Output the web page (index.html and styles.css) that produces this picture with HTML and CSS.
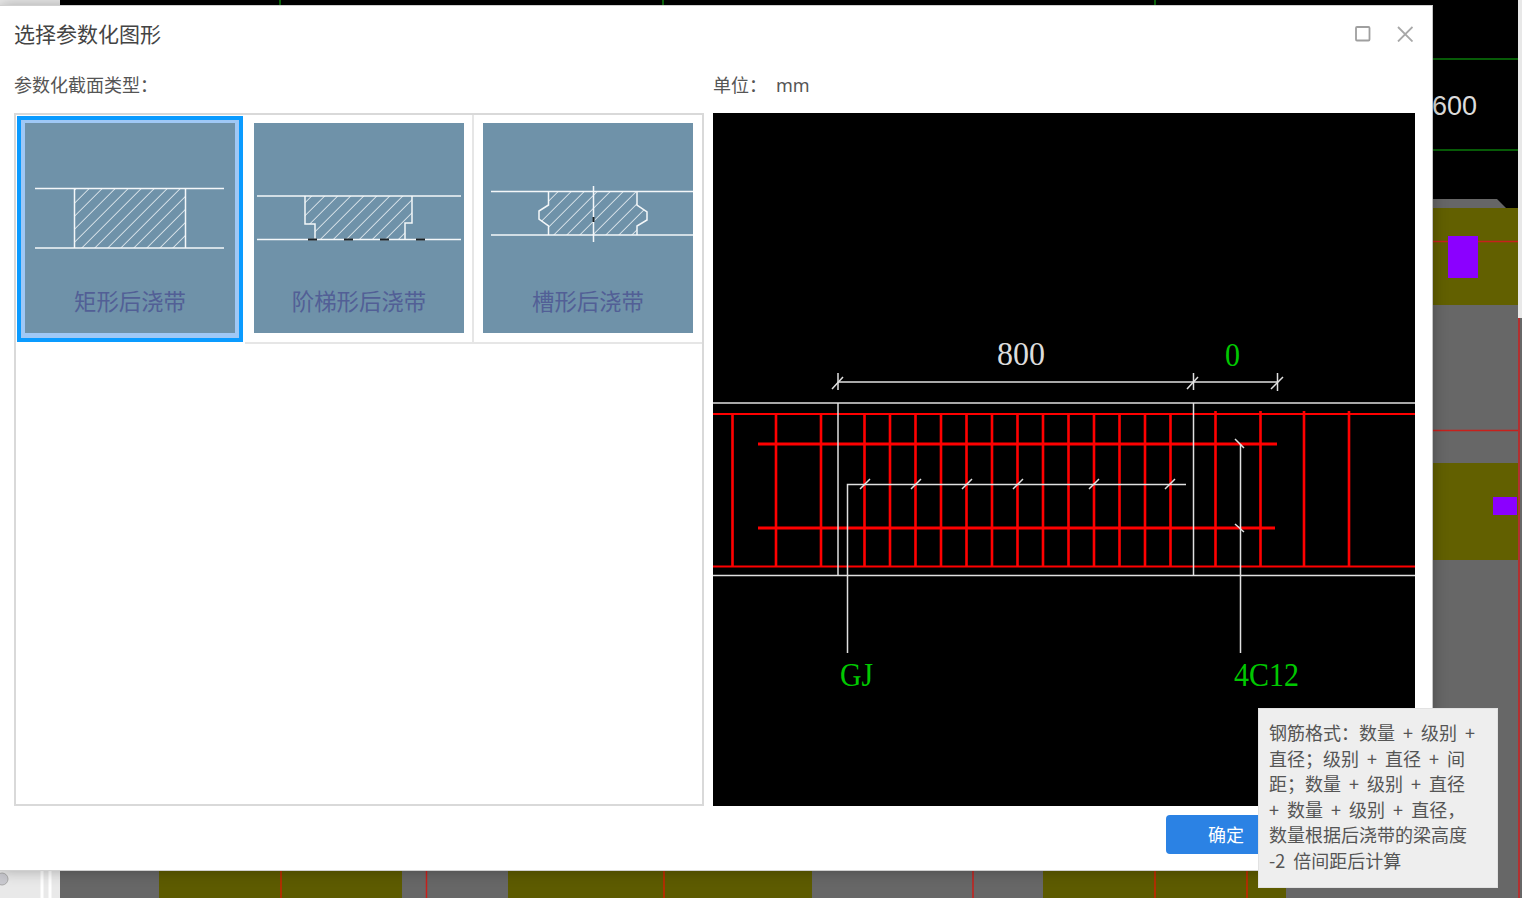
FILE: index.html
```html
<!DOCTYPE html>
<html lang="zh-CN">
<head>
<meta charset="utf-8">
<title>选择参数化图形</title>
<link rel="stylesheet" href="styles.css">
</head>
<body>
<div class="stage">
  <svg class="cad" viewBox="0 0 1522 898" aria-hidden="true">
    <rect x="0" y="0" width="60" height="898" fill="#e9e9e9"/>
    <rect x="60" y="0" width="1462" height="898" fill="#000"/>
    <path d="M280 0V5M663 0V5M1155 0V5" stroke="#0a6a0a" stroke-width="2"/>
    <path d="M1433 59H1518M1433 150H1518" stroke="#0a7a0a" stroke-width="1.5"/>
    <path d="M1433 199H1497L1506 208H1433Z" fill="#666"/>
    <rect x="60" y="208" width="1458" height="690" fill="#676767"/>
    <rect x="1433" y="208" width="85" height="97" fill="#626000"/>
    <rect x="1433" y="463" width="85" height="97" fill="#626000"/>
    <path d="M1433 241.500H1518M1433 430.500H1518" stroke="#c8201c" stroke-width="1.500"/>
    <rect x="1448" y="236" width="30" height="42" fill="#8b00ff"/>
    <rect x="1493" y="497" width="24" height="18" fill="#8b00ff"/>
    <rect x="159" y="870" width="243" height="28" fill="#5d5b00"/>
    <rect x="508" y="870" width="304" height="28" fill="#5d5b00"/>
    <rect x="1043" y="870" width="243" height="28" fill="#5d5b00"/>
    <path d="M281 870V898M664 870V898M1155 870V898M1247 870V898" stroke="#b03000" stroke-width="2"/>
    <path d="M426.500 870V898M973 870V898" stroke="#c8201c" stroke-width="1.500"/>
    <rect x="1518" y="0" width="4" height="318" fill="#e8e8e8"/>
    <rect x="1518" y="318" width="4" height="580" fill="#676767"/>
    <path d="M1519 318V898" stroke="#b23030" stroke-width="2"/>
    <path d="M42 870V898M50 870V898" stroke="#fff" stroke-width="3"/>
    <circle cx="2" cy="879" r="6" fill="#c9c9cf" stroke="#aaa"/>
    <text class="cad-label" x="1432" y="115">600</text>
  </svg>

  <section class="dialog">
    <header class="dialog-head">
      <h1 class="dialog-title">选择参数化图形</h1>
      <div class="win-buttons">
        <svg class="win-icon" viewBox="0 0 16 16" aria-hidden="true"><rect x="1" y="1" width="13.500" height="13.500" rx="1" fill="none" stroke="#9f9f9f" stroke-width="1.800"/></svg>
        <svg class="win-icon" viewBox="0 0 16 16" aria-hidden="true"><path d="M1 1L15.500 15.500M15.500 1L1 15.500" fill="none" stroke="#a8a8a8" stroke-width="1.800"/></svg>
      </div>
    </header>

    <div class="dialog-body">
      <div class="col">
        <div class="field-label">参数化截面类型：</div>
        <div class="type-panel">
          <div class="type-grid">
            <div class="type-cell is-selected">
              <div class="thumb">
                <svg class="thumb-art" viewBox="1 0 210 160" aria-hidden="true">
                  <defs>
                    <pattern id="hatch" width="9.200" height="9.200" patternUnits="userSpaceOnUse" patternTransform="rotate(45)">
                      <line x1="0" y1="0" x2="0" y2="9.200" stroke="#f2f6f8" stroke-width="1.500"/>
                    </pattern>
                  </defs>
                  <rect x="50.500" y="65.500" width="111" height="59.500" fill="url(#hatch)"/>
                  <path d="M11 65.500H200M11 125H200M50.500 65.500V125M161.500 65.500V125" fill="none" stroke="#f4f7f9" stroke-width="1.500"/>
                </svg>
                <div class="thumb-label">矩形后浇带</div>
              </div>
            </div>
            <div class="type-cell">
              <div class="thumb">
                <svg class="thumb-art" viewBox="0 0 210 160" aria-hidden="true">
                  <path d="M51 73H158V100H151V116.500H61V101H51Z" fill="url(#hatch)"/>
                  <path d="M3 73H207M3 116.500H207M51 73V101H61V116.500M158 73V100H151V116.500" fill="none" stroke="#f4f7f9" stroke-width="1.500"/>
                  <path d="M54 116.500H63M90 116.500H99M126 116.500H135M162 116.500H171" fill="none" stroke="#1b2226" stroke-width="2"/>
                </svg>
                <div class="thumb-label">阶梯形后浇带</div>
              </div>
            </div>
            <div class="type-cell">
              <div class="thumb">
                <svg class="thumb-art" viewBox="0 0 210 160" aria-hidden="true">
                  <path d="M65.500 68.500V82L56 88V96L65.500 103V112H154V103L164 97V89L154 82V68.500Z" fill="url(#hatch)"/>
                  <path d="M8 68.500H210M8 112H210M110.500 63V119M65.500 68.500V82L56 88V96L65.500 103V112M154 68.500V82L164 89V97L154 103V112" fill="none" stroke="#f4f7f9" stroke-width="1.500"/>
                  <path d="M110.500 94V99" fill="none" stroke="#1b2226" stroke-width="2"/>
                </svg>
                <div class="thumb-label">槽形后浇带</div>
              </div>
            </div>
          </div>
        </div>
      </div>

      <div class="col">
        <div class="field-label">单位：<span class="unit">mm</span></div>
        <div class="preview">
          <svg class="preview-art" viewBox="713 113 702 693">
            <g stroke="#f00" fill="none">
              <path d="M713 414H1415M713 566.500H1415" stroke-width="2"/>
              <path d="M758 444H1277M758 528H1275" stroke-width="3"/>
              <path d="M732.500 414V566M776 414V566M821 414V566M864.500 414V566M890 414V566M915.500 414V566M941 414V566M966.500 414V566M992 414V566M1017.500 414V566M1043 414V566M1068.500 414V566M1094 414V566M1119.500 414V566M1145 414V566M1170.500 414V566M1215.500 411V566M1260.500 411V566M1304 411V566M1349 411V566" stroke-width="2.600"/>
            </g>
            <g stroke="#e0e0e0" fill="none" stroke-width="1.500">
              <path d="M713 403H1415M713 575.500H1415"/>
              <path d="M838 403V575M1193.500 403V575"/>
              <path d="M838 382H1277"/>
              <path d="M838 373V390M1193.500 373V390M1277.500 373V391"/>
              <path d="M832 389L843 377M1187 389L1198 377M1271 389L1283 377"/>
              <path d="M847.500 653V484.500H1186"/>
              <path d="M1240.500 653V444"/>
              <path d="M860 489L870 479M911 489L921 479M962 489L972 479M1013 489L1023 479M1089 489L1099 479M1165 489L1175 479"/>
              <path d="M1235 439L1244 448M1235 524L1244 532"/>
            </g>
            <text class="cad-num white" x="997" y="365" textLength="48" lengthAdjust="spacingAndGlyphs">800</text>
            <text class="cad-num green" x="1225" y="366" textLength="15" lengthAdjust="spacingAndGlyphs">0</text>
            <text class="cad-num green" x="840" y="686" textLength="33" lengthAdjust="spacingAndGlyphs">GJ</text>
            <text class="cad-num green" x="1234" y="686" textLength="65" lengthAdjust="spacingAndGlyphs">4C12</text>
          </svg>
        </div>
      </div>
    </div>

    <footer class="dialog-foot">
      <button class="primary-btn" type="button">确定</button>
    </footer>
  </section>

  <div class="tooltip">钢筋格式：数量 + 级别 +<br>直径；级别 + 直径 + 间<br>距；数量 + 级别 + 直径<br>+ 数量 + 级别 + 直径，<br>数量根据后浇带的梁高度<br>-2 倍间距后计算</div>
</div>
</body>
</html>
```

FILE: styles.css
```css
* { box-sizing: border-box; }

html, body {
  margin: 0;
  padding: 0;
  height: 100%;
  overflow: hidden;
}

body {
  font-family: "Noto Sans CJK SC", "Noto Sans", "Liberation Sans", sans-serif;
  color: #444;
  background: #000;
}

.stage {
  position: relative;
  width: 1522px;
  height: 898px;
  overflow: hidden;
}

.cad {
  position: absolute;
  left: 0;
  top: 0;
  width: 1522px;
  height: 898px;
  display: block;
}

.cad-label {
  font-family: "Liberation Sans", sans-serif;
  font-size: 27px;
  fill: #dcdcdc;
}

.dialog {
  position: absolute;
  left: 0;
  top: 5px;
  width: 1433px;
  height: 866px;
  display: flex;
  flex-direction: column;
  background: #fff;
  border-top: 1px solid #d0d0d0;
  border-right: 1px solid #c4c4c4;
  border-bottom: 1px solid #d0d0d0;
  box-shadow: 0 0 14px rgba(0, 0, 0, 0.28);
}

.dialog-head {
  height: 59px;
  flex: none;
  display: flex;
  align-items: center;
  justify-content: space-between;
  padding: 0 19px 4px 14px;
}

.dialog-title {
  margin: 0;
  font-size: 21px;
  font-weight: 400;
  line-height: 1.4;
  color: #444;
}

.win-buttons {
  display: flex;
  align-items: center;
  gap: 26px;
}

.win-icon {
  width: 16px;
  height: 16px;
  display: block;
}

.dialog-body {
  flex: none;
  display: flex;
  gap: 9px;
  padding: 0 17px 0 14px;
}

.col {
  display: flex;
  flex-direction: column;
}

.field-label {
  height: 48px;
  padding-top: 6px;
  font-size: 18px;
  line-height: 26px;
  color: #555;
  white-space: nowrap;
}

.unit {
  margin-left: 9px;
  font-family: "Noto Sans", sans-serif;
}

.type-panel {
  width: 690px;
  height: 693px;
  border: 2px solid #d9d9d9;
}

.type-grid {
  display: grid;
  grid-template-columns: 229px 229px 1fr;
  height: 229px;
}

.type-cell {
  display: flex;
  align-items: center;
  justify-content: center;
  padding: 0 0 1px 1px;
  border-right: 2px solid #e6e6e6;
  border-bottom: 2px solid #e6e6e6;
}

.type-cell:last-child {
  border-right: 0;
  padding: 0 0 1px 0;
}

.type-cell.is-selected {
  margin: 1px 2px 2px 1px;
  padding: 0 0 2px 0;
  border: 0;
  box-shadow: inset 0 0 0 4px #0a9bff, inset 0 0 0 9px #9fc8f6;
}

.thumb {
  width: 210px;
  height: 210px;
  background: #6f92a9;
  display: flex;
  flex-direction: column;
}

.thumb-art {
  width: 210px;
  height: 160px;
  display: block;
  flex: none;
}

.thumb-label {
  height: 34px;
  line-height: 34px;
  font-size: 22.400px;
  text-align: center;
  color: #525f96;
}

.preview {
  width: 702px;
  height: 693px;
  background: #000;
}

.preview-art {
  width: 702px;
  height: 693px;
  display: block;
}

.cad-num {
  font-family: "Liberation Serif", serif;
  font-size: 34px;
}

.white { fill: #dcdcdc; }
.green { fill: #00c800; }

.dialog-foot {
  flex: none;
  display: flex;
  justify-content: flex-end;
  padding: 9px 146px 0 0;
}

.primary-btn {
  width: 120px;
  height: 39px;
  padding: 0 0 2px;
  border: 0;
  border-radius: 4px;
  background: #2b82e4;
  color: #fff;
  font-family: inherit;
  font-size: 18px;
}

.tooltip {
  position: absolute;
  left: 1258px;
  top: 708px;
  width: 240px;
  height: 180px;
  padding: 11px 0 0 10px;
  background: #eeeeee;
  border: 1px solid #e2e2e2;
  color: #555;
  font-size: 18px;
  line-height: 25.500px;
  word-spacing: 4px;
  white-space: nowrap;
}
```
